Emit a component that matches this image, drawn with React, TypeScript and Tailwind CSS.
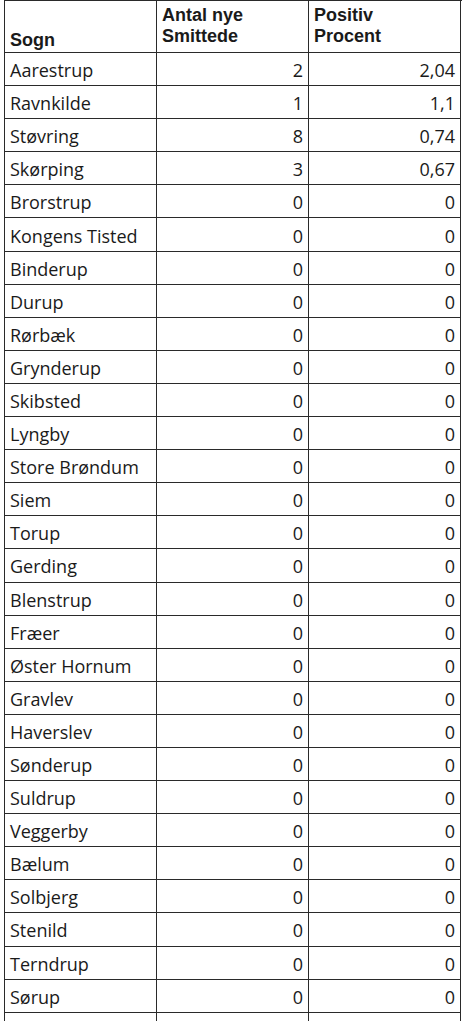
const rows: [string, string, string][] = [
  ["Aarestrup", "2", "2,04"],
  ["Ravnkilde", "1", "1,1"],
  ["Støvring", "8", "0,74"],
  ["Skørping", "3", "0,67"],
  ["Brorstrup", "0", "0"],
  ["Kongens Tisted", "0", "0"],
  ["Binderup", "0", "0"],
  ["Durup", "0", "0"],
  ["Rørbæk", "0", "0"],
  ["Grynderup", "0", "0"],
  ["Skibsted", "0", "0"],
  ["Lyngby", "0", "0"],
  ["Store Brøndum", "0", "0"],
  ["Siem", "0", "0"],
  ["Torup", "0", "0"],
  ["Gerding", "0", "0"],
  ["Blenstrup", "0", "0"],
  ["Fræer", "0", "0"],
  ["Øster Hornum", "0", "0"],
  ["Gravlev", "0", "0"],
  ["Haverslev", "0", "0"],
  ["Sønderup", "0", "0"],
  ["Suldrup", "0", "0"],
  ["Veggerby", "0", "0"],
  ["Bælum", "0", "0"],
  ["Solbjerg", "0", "0"],
  ["Stenild", "0", "0"],
  ["Terndrup", "0", "0"],
  ["Sørup", "0", "0"],
  ["", "", ""],
];

export default function App() {
  return (
    <div className="h-[1021px] overflow-hidden bg-white pl-[4px] text-[#1a1a1a]">
      <div className="w-[458px] border-l-[1.5px] border-t-[1.5px] border-[#2a2a2a]">
        {/* Header */}
        <div className="grid h-[52px] grid-cols-[152px_152px_152px] font-['Liberation_Sans',Arial,sans-serif] text-[18px] font-bold leading-[21px]">
          <div className="flex items-end border-b-[1.5px] border-r-[1.5px] border-[#2a2a2a] px-[5px] pb-[1px]">
            Sogn
          </div>
          <div className="border-b-[1.5px] border-r-[1.5px] border-[#2a2a2a] px-[5px] pt-[4px]">
            Antal nye
            <br />
            Smittede
          </div>
          <div className="border-b-[1.5px] border-r-[1.5px] border-[#2a2a2a] px-[5px] pt-[4px]">
            Positiv
            <br />
            Procent
          </div>
        </div>

        {/* Rows */}
        {rows.map(([name, count, pct], i) => (
          <div
            key={i}
            className="grid h-[33.1px] grid-cols-[152px_152px_152px] font-['Open_Sans',sans-serif] text-[18px] leading-none"
          >
            <div className="flex items-center border-b-[1.5px] border-r-[1.5px] border-[#2a2a2a] px-[5px] pt-[2px]">
              {name}
            </div>
            <div className="flex items-center justify-end border-b-[1.5px] border-r-[1.5px] border-[#2a2a2a] px-[5px] pt-[2px]">
              {count}
            </div>
            <div className="flex items-center justify-end border-b-[1.5px] border-r-[1.5px] border-[#2a2a2a] px-[5px] pt-[2px]">
              {pct}
            </div>
          </div>
        ))}
      </div>
    </div>
  );
}
